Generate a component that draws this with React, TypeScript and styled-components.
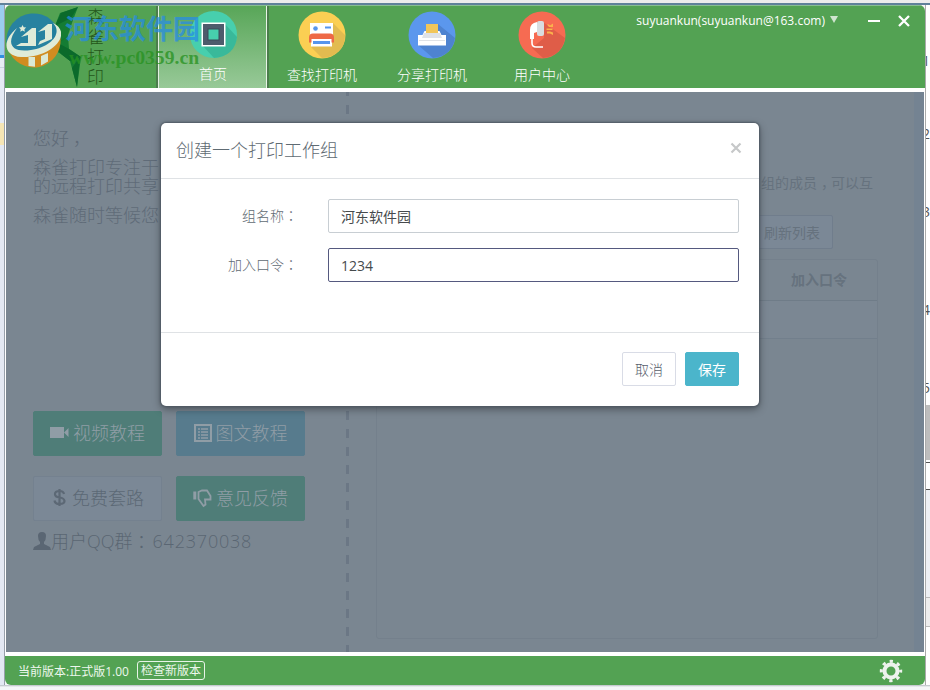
import React from "react";
import styled, { createGlobalStyle, css } from "styled-components";

const GlobalStyle = createGlobalStyle`
  * { box-sizing: border-box; }
  html, body { margin: 0; padding: 0; background: #f5f6f8; }
  body, button, input { font-family: "Open Sans", "Noto Sans CJK SC", sans-serif; }
  svg { display: block; flex: none; }
  p { margin: 0; }
`;

const Desktop = styled.div`
  position: relative;
  display: grid;
  grid-template-columns: 5px 920px 5px;
  grid-template-rows: 5px 680px 5px;
  width: 930px;
  height: 690px;
  overflow: hidden;
`;
const TopEdge = styled.div`
  grid-column: 1 / -1;
  background: linear-gradient(#ececec 0 3px, #5f819a 3px 5px);
`;
const LeftEdge = styled.div`
  background: linear-gradient(#9bcdf0 0 50px, #2f8fe0 50px 53px, #e6ecf5 53px 62px, #c9d3e2 62px 63px, #e5eaf4 63px 118px, #f5e5b4 118px 140px, #e3e8f2 140px);
  border-right: 1px solid #98a0aa;
`;
const RightEdge = styled.div`
  position: relative;
  overflow: hidden;
  border-left: 1px solid #aaa;
  background: linear-gradient(#fff 0 400px, #bdbdbd 400px 455px, #fff 455px 457px, #555 457px 458px, #fff 458px 484px, #555 484px 485px, #eef0f4 485px 592px, #bbb 592px 593px, #eee 593px 621px, #bbb 621px 622px, #fff 622px);
`;
const EdgeGlyph = styled.span<{ $y: number }>`
  position: absolute;
  left: -4px;
  top: ${(p) => p.$y}px;
  font-size: 14px;
  line-height: 14px;
  color: #555;
`;
const BottomEdge = styled.div`
  grid-column: 1 / -1;
  background: linear-gradient(#b6bcc2, #f4f6f8 2px);
`;

const Window = styled.main`
  display: flex;
  flex-direction: column;
  background: #fff;
  border-radius: 6px;
  overflow: hidden;
`;
const Header = styled.header`
  display: flex;
  height: 83px;
  background: #53a253;
  border-top: 1px solid #88be91;
  color: #fff;
`;
const Brand = styled.div`
  display: flex;
  align-items: flex-start;
  width: 153px;
  padding-left: 48px;
  border-right: 2px solid #4b7d4c;
`;
const BrandName = styled.div`
  width: 17px;
  margin: 1px 0 0 1px;
  font-size: 17px;
  line-height: 20px;
  font-weight: 300;
  color: #24561a;
  word-break: break-all;
`;
const Tab = styled.div<{ $active?: boolean }>`
  display: flex;
  flex-direction: column;
  align-items: center;
  width: 110px;
  padding-top: 5px;
  font-size: 14px;
  line-height: 20px;
  font-weight: 300;
  ${(p) =>
    p.$active &&
    css`
      width: 111px;
      margin-right: -2px;
      border-left: 1px solid #e3f0e2;
      border-right: 2px solid #4b7d4c;
      box-shadow: inset -1px 0 #e8f3e7;
      background: linear-gradient(#58a658, #98c998);
    `}
  span { margin-top: 6px; }
`;
const Account = styled.div`
  display: flex;
  align-items: center;
  height: 28px;
  margin-left: auto;
  padding-right: 15px;
  font-size: 12px;
`;
const Caret = styled.i`
  margin: -2px 0 0 5px;
  border: 4px solid transparent;
  border-top: 7px solid #cfe5cf;
  border-bottom: 0;
`;
const WindowButtons = styled.div`
  display: flex;
  align-items: center;
  gap: 18px;
  margin: 1px 0 0 29px;
`;

const Content = styled.section`
  display: flex;
  height: 560px;
  margin: 4px 1px;
  border-right: 10px solid #748392;
  background: #7a8691;
  color: #66727e;
`;
const Welcome = styled.div`
  width: 340px;
  padding: 37px 0 0 27px;
  font-size: 18px;
  line-height: 19px;
  font-weight: 300;
`;
const Greeting = styled.div`
  height: 282px;
  color: #5f6b78;
  p { margin-bottom: 10px; white-space: pre-line; }
`;
const Actions = styled.div`
  display: grid;
  grid-template-columns: 129px 129px;
  grid-auto-rows: 45px;
  gap: 20px 14px;
`;
const Action = styled.div<{ $tone: "green" | "blue" | "plain" }>`
  display: flex;
  align-items: center;
  justify-content: center;
  gap: 4px;
  border-radius: 2px;
  background: ${(p) => ({ green: "#4f7d78", blue: "#577b8d", plain: "#7b8896" })[p.$tone]};
  border: 1px solid ${(p) => ({ green: "#4f7d78", blue: "#577b8d", plain: "#74818f" })[p.$tone]};
  color: ${(p) => (p.$tone === "plain" ? "#5c6875" : "#909da6")};
`;
const Contact = styled.div`
  display: flex;
  align-items: center;
  height: 40px;
  color: #5a6673;
`;
const ContactNumber = styled.span`
  margin-left: 2px;
  letter-spacing: 0.8px;
`;
/* Traditional Chinese faces centre the full-width colon in its cell. */
const Colon = styled.span`
  font-family: "Noto Sans CJK TC", sans-serif;
  line-height: 1;
`;
const Comma = styled.span`
  margin: 0 -4px 0 4px;
`;
const DashedDivider = styled.div`
  width: 3px;
  background: repeating-linear-gradient(#6b7785 0 9px, transparent 9px 18px);
  background-position: 0 -5px;
  background-size: 3px 18px;
`;
const Groups = styled.div`
  display: flex;
  flex-direction: column;
  align-items: flex-end;
  flex: 1;
  padding: 81px 36px 0 27px;
  font-size: 14px;
  line-height: 20px;
`;
const GroupsHint = styled.p`
  height: 20px;
  margin-right: 5px;
`;
const Refresh = styled.div`
  display: flex;
  align-items: center;
  height: 34px;
  margin: 22px 45px 10px 0;
  padding: 1px 12px 0;
  border: 1px solid #707d8c;
  border-radius: 2px;
  background: #7b8896;
`;
const Table = styled.div`
  width: 502px;
  height: 380px;
  border: 1px solid #74808c;
  border-radius: 3px;
`;
const TableHead = styled.div`
  display: flex;
  align-items: center;
  justify-content: flex-end;
  height: 41px;
  padding-right: 30px;
  border-bottom: 1px solid #6f7c88;
  font-weight: 700;
`;
const TableRow = styled.div`
  height: 38px;
  border-bottom: 1px solid #727f8c;
  background: #7b8793;
`;

const Footer = styled.footer`
  display: flex;
  align-items: center;
  height: 29px;
  padding: 0 22px 0 13px;
  background: #53a253;
  color: #edf7ed;
  font-size: 12px;
  svg { margin-left: auto; }
`;
const UpdateButton = styled.span`
  height: 19px;
  margin-left: 8px;
  padding: 0 3px;
  border: 1px solid #e7f3e7;
  border-radius: 3px;
  line-height: 17px;
`;

const Dialog = styled.div`
  position: absolute;
  left: 161px;
  top: 123px;
  width: 598px;
  height: 283px;
  border-radius: 5px;
  background: #fff;
  box-shadow: 0 0 2px 1px #4f5963, 0 3px 9px rgba(0, 0, 0, 0.4);
  color: #5f6b73;
  font-size: 14px;
`;
const DialogHeader = styled.div`
  display: flex;
  align-items: center;
  justify-content: space-between;
  height: 56px;
  padding: 0 17px 3px 15px;
  border-bottom: 1px solid #dfe2e5;
  font-size: 18px;
  font-weight: 300;
  svg { margin-bottom: 3px; }
`;
const DialogBody = styled.div`
  display: flex;
  flex-direction: column;
  gap: 15px;
  height: 154px;
  padding: 20px 20px 0;
  border-bottom: 1px solid #dfe2e5;
`;
const Field = styled.label`
  display: flex;
  align-items: center;
  height: 34px;
`;
const FieldLabel = styled.span`
  width: 117px;
  margin-right: 30px;
  padding-bottom: 2px;
  text-align: right;
  white-space: nowrap;
  font-weight: 300;
`;
const Input = styled.input<{ $focused?: boolean }>`
  width: 411px;
  height: 34px;
  padding: ${(p) => (p.$focused ? "1px 12px 0" : "0 12px 1px")};
  border: 1px solid ${(p) => (p.$focused ? "#55597f" : "#c8ced3")};
  border-radius: 2px;
  outline: 0;
  color: #464a4c;
  font-size: 14px;
`;
const DialogFooter = styled.div`
  display: flex;
  justify-content: flex-end;
  gap: 9px;
  padding: 19px 20px;
`;
const Button = styled.button<{ $primary?: boolean }>`
  width: 54px;
  height: 34px;
  padding: 0;
  border: 1px solid ${(p) => (p.$primary ? "#4bb5cb" : "#d9dce6")};
  border-radius: 2px;
  background: ${(p) => (p.$primary ? "#4bb5cb" : "#fff")};
  color: ${(p) => (p.$primary ? "#fff" : "#585e6c")};
  font-size: 14px;
  font-weight: ${(p) => (p.$primary ? 400 : 300)};
`;

const Watermark = styled.div`
  position: absolute;
  left: 5px;
  top: 10px;
  display: flex;
  pointer-events: none;
`;
const WatermarkText = styled.div`
  width: 140px;
  margin-left: 4px;
  white-space: nowrap;
`;
const WatermarkName = styled.div`
  margin-top: 2px;
  font-size: 27px;
  line-height: 34px;
  font-weight: 700;
  color: rgba(37, 139, 233, 0.74);
`;
const WatermarkUrl = styled.div`
  margin-left: 4px;
  font-family: "Liberation Serif", serif;
  font-size: 19.7px;
  line-height: 22px;
  font-weight: 700;
  color: rgba(38, 145, 31, 0.75);
`;

const BirdLogo = () => (
  <svg width="33" height="82" viewBox="0 0 33 82">
    <path d="M25 1 7 7 1 22-6 40 8 48l9 7 7 26 4-30-12-8-1-14 5-15z" fill="#147c33" />
    <path d="M25 1 8 7 2 20l16-8zM16 29l-11 8 11 6 12 8-11 4-9-7-6-8zM19 62l8-11-3 30z" fill="#0b6a2b" />
  </svg>
);
const HomeIcon = () => (
  <svg width="47" height="47" viewBox="0 0 47 47">
    <circle cx="23.5" cy="23.5" r="23.5" fill="#47cfad" />
    <path d="m12 34 12 13q21-2 23-21L34 12z" fill="#39b99a" />
    <path d="M11.500 11.500h24v24h-24z" fill="#fff" />
    <path d="M13 13h21v21H13z" fill="#4d5c6c" />
    <path d="M17.500 17.500h12v12h-12z" fill="#3a4a59" />
    <path d="M18.500 18.500h10v10h-10z" fill="#47cfad" />
  </svg>
);
const PrinterIcon = () => (
  <svg width="48" height="48" viewBox="0 0 48 48">
    <circle cx="24" cy="24" r="23.500" fill="#fbcf53" />
    <path d="m35 12 12 12q0 10-5 15-8 8-18 8L13 36l22-12z" fill="#e2bb50" />
    <path d="M12 12h23v12H12zM13 28h21v7.500H13z" fill="#fff" />
    <path d="M15 22.500h17q4 0 4 4v5h-2.500V28h-20v3.500H11v-5q0-4 4-4z" fill="#ee6946" />
    <circle cx="17.500" cy="17.500" r="2.300" fill="#5795ec" />
    <path d="M27 15.500h6v2h-6zM15 30h17v3H15z" fill="#5795ec" />
  </svg>
);
const ShareIcon = () => (
  <svg width="48" height="48" viewBox="0 0 48 48">
    <circle cx="24" cy="24" r="23.500" fill="#5b97ed" />
    <path d="m30 13 17 14q-3 18-22 20L10 34l20-8z" fill="#4e83d0" />
    <path d="M18 13h12v10H18z" fill="#f2c659" />
    <path d="M16.500 20H18v3h12v-3h1.500l2 4H38v10.500H10V24h4.500z" fill="#fff" />
    <path d="M16 22h16l2 5H14zM11 29h26v1H11z" fill="#dfe2e7" />
  </svg>
);
const UserIcon = () => (
  <svg width="48" height="48" viewBox="0 0 48 48">
    <circle cx="24" cy="24" r="23.500" fill="#f66b52" />
    <path d="M25 11 47 27q-3 18-22 20L14 37l12-10z" fill="#df5d48" />
    <path d="M19 11q-7 1-7 8v9h4v-6l3-1z" fill="#fff" />
    <rect x="19" y="10" width="7" height="15" rx="2" fill="#d9dde0" />
    <path d="M14 28v4q0 4 4 4h7" fill="none" stroke="#fff" strokeWidth="1.600" />
    <path d="M29 13.500h2l1 1 3-2v3.500h-4zM28.500 17.500h6v1.500h-6zM29 20.500h3l3 1v2.500l-3-1.500h-3z" fill="#fbb14c" />
  </svg>
);
const GearIcon = () => (
  <svg width="24" height="24" viewBox="0 0 24 24" fill="none" stroke="#eef2ee">
    <circle cx="12" cy="12" r="6.500" strokeWidth="4" />
    <circle cx="12" cy="12" r="9.700" strokeWidth="3" strokeDasharray="3.300 4.318" strokeDashoffset="1.650" />
  </svg>
);
const VideoIcon = () => (
  <svg width="19" height="20" viewBox="0 0 19 20" fill="currentColor">
    <path d="M0 3h14v11H0zM14 8.500 18.500 4v9z" />
  </svg>
);
const ListIcon = () => (
  <svg width="18" height="22" viewBox="0 0 18 22" fill="none" stroke="currentColor">
    <path d="M1 2h16v16H1z" strokeWidth="2" />
    <path d="M4 6h2m1 0h7M4 9h2m1 0h7M4 12h2m1 0h7M4 15h2m1 0h7" strokeWidth="1.500" />
  </svg>
);
const DollarIcon = () => (
  <svg width="17" height="24" viewBox="0 0 17 24" fill="none" stroke="currentColor">
    <path d="M13 7Q12.500 4 8.500 4 4 4 4 7t4.500 3.500 5 3.500q0 3-5 3-4.500 0-5-3.500M8.500 2v17" strokeWidth="2.200" />
  </svg>
);
/* Thumbs-down outline: cuff bar on the left, fist with the thumb pointing down. */
const ThumbIcon = () => (
  <svg width="19" height="24" viewBox="0 0 19 24" fill="none" stroke="currentColor">
    <path d="M1.800 4.500v8" strokeWidth="3" />
    <path d="M5.500 5 9 3.500h5l3.500 5.500v3.500H12l.5 5-2 1.500L5.500 12z" strokeWidth="1.800" />
  </svg>
);
const PersonIcon = () => (
  <svg width="18" height="19" viewBox="0 0 18 19" fill="currentColor">
    <path d="M9 0Q5 0 5 4q0 4 2 6v2l-6 3-1 3h18l-1-3-6-3v-2q2-2 2-6 0-4-4-4z" />
  </svg>
);
const WatermarkLogo = () => (
  <svg width="56" height="58" viewBox="0 0 56 58">
    <path d="M1.500 33A27 27 0 0 1 55.500 28L30 42 8 42z" fill="#237fa6" opacity=".93" />
    <path d="M3 39Q30 47 55.500 28A27 27 0 0 1 3 39z" fill="#d18c20" />
    <path d="M23.500 47h6.500v9.800l-6.500-.8zM36 46l7-3v8.500l-7 4z" fill="#dbe9d6" />
    <path d="M12 18C-4 31-1 46 16 47 36 48 54 37 56 26 57 20 54 16 48 13 58 23 46 37 26 40 7 43 0 34 12 18z" fill="#dfebd8" />
    <path d="M16 27 27 18h4v18H11l5-3h7v-8zM33 22l10-8h4v15l-14 6 2-4 5-2V20z" fill="#dfebd8" />
    <path d="m17.500 15 1.200 2.200 2.500.3-1.800 1.700.4 2.500-2.300-1.200-2.200 1.200.4-2.500-1.800-1.700 2.500-.3z" fill="#dfebd8" />
  </svg>
);

export default function App() {
  return (
    <>
      <GlobalStyle />
      <Desktop>
        <TopEdge />
        <LeftEdge />
        <Window>
          <Header>
            <Brand>
              <BirdLogo />
              <BrandName>森雀打印</BrandName>
            </Brand>
            <Tab $active><HomeIcon /><span>首页</span></Tab>
            <Tab><PrinterIcon /><span>查找打印机</span></Tab>
            <Tab><ShareIcon /><span>分享打印机</span></Tab>
            <Tab><UserIcon /><span>用户中心</span></Tab>
            <Account>
              suyuankun(suyuankun@163.com)
              <Caret />
              <WindowButtons>
                <svg width="13" height="12" viewBox="0 0 13 12"><path d="M1 6h12" stroke="#fff" strokeWidth="2" /></svg>
                <svg width="12" height="12" viewBox="0 0 12 12"><path d="m1 1 10 10M11 1 1 11" stroke="#fff" strokeWidth="2.300" /></svg>
              </WindowButtons>
            </Account>
          </Header>
          <Content>
            <Welcome>
              <Greeting>
                <p>您好<Comma>，</Comma></p>
                <p>{"森雀打印专注于\n的远程打印共享"}</p>
                <p>森雀随时等候您</p>
              </Greeting>
              <Actions>
                <Action $tone="green"><VideoIcon />视频教程</Action>
                <Action $tone="blue"><ListIcon />图文教程</Action>
                <Action $tone="plain"><DollarIcon />免费套路</Action>
                <Action $tone="green"><ThumbIcon />意见反馈</Action>
              </Actions>
              <Contact>
                <PersonIcon />用户QQ群<Colon>：</Colon>
                <ContactNumber>642370038</ContactNumber>
              </Contact>
            </Welcome>
            <DashedDivider />
            <Groups>
              <GroupsHint>组的成员<Comma>，</Comma>可以互</GroupsHint>
              <Refresh>刷新列表</Refresh>
              <Table>
                <TableHead>加入口令</TableHead>
                <TableRow />
              </Table>
            </Groups>
          </Content>
          <Footer>
            当前版本:正式版1.00
            <UpdateButton>检查新版本</UpdateButton>
            <GearIcon />
          </Footer>
        </Window>
        <RightEdge>
          <EdgeGlyph $y={49}>1</EdgeGlyph>
          <EdgeGlyph $y={122}>2</EdgeGlyph>
          <EdgeGlyph $y={200}>3</EdgeGlyph>
          <EdgeGlyph $y={298}>4</EdgeGlyph>
          <EdgeGlyph $y={376}>5</EdgeGlyph>
        </RightEdge>
        <BottomEdge />
        <Dialog>
          <DialogHeader>
            创建一个打印工作组
            <svg width="12" height="12" viewBox="0 0 12 12"><path d="m1.500 1.500 9 9m0-9-9 9" stroke="#c6c8c9" strokeWidth="2.200" /></svg>
          </DialogHeader>
          <DialogBody>
            <Field>
              <FieldLabel>组名称<Colon>：</Colon></FieldLabel>
              <Input defaultValue="河东软件园" />
            </Field>
            <Field>
              <FieldLabel>加入口令<Colon>：</Colon></FieldLabel>
              <Input $focused defaultValue="1234" />
            </Field>
          </DialogBody>
          <DialogFooter>
            <Button>取消</Button>
            <Button $primary>保存</Button>
          </DialogFooter>
        </Dialog>
        <Watermark>
          <WatermarkLogo />
          <WatermarkText>
            <WatermarkName>河东软件园</WatermarkName>
            <WatermarkUrl>www.pc0359.cn</WatermarkUrl>
          </WatermarkText>
        </Watermark>
      </Desktop>
    </>
  );
}
